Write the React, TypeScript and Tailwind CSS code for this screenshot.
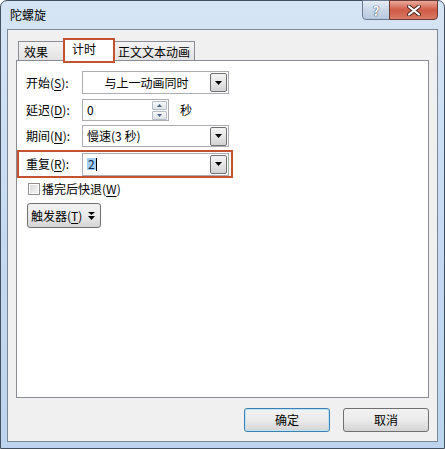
import React from "react";

const font = {
  fontFamily: '"Microsoft YaHei", "Noto Sans CJK SC", "Liberation Sans", sans-serif',
};

function Key({ k }: { k: string }) {
  return (
    <>
      (<span className="underline underline-offset-2">{k}</span>)
    </>
  );
}

function DropButton() {
  return (
    <div className="mr-px flex h-[19px] w-[17px] items-center justify-center rounded-[2px] border border-[#707070] bg-gradient-to-b from-[#f3f3f3] via-[#e6e6e6] to-[#d3d3d3]">
      <svg width="7" height="4" viewBox="0 0 7 4">
        <polygon points="0,0 7,0 3.5,4" fill="#000" />
      </svg>
    </div>
  );
}

function ComboBox({
  text,
  centered,
  height,
  selected,
}: {
  text: string;
  centered?: boolean;
  height: string;
  selected?: boolean;
}) {
  return (
    <div
      className={`flex w-[147px] items-center border border-[#abadb3] bg-white ${height}`}
    >
      <div
        className={`flex-1 text-[12px] leading-none ${centered ? "text-center" : "pl-[4px]"}`}
      >
        {selected ? (
          <span className="inline-flex items-center">
            <span className="bg-[#a6cdf2] px-px text-[#0c2a52]">{text}</span>
            <span className="h-[13px] w-px bg-black" />
          </span>
        ) : (
          text
        )}
      </div>
      <DropButton />
    </div>
  );
}

function Spinner() {
  return (
    <div className="flex h-[22px] w-[87px] items-center border border-[#abadb3] bg-white">
      <div className="flex-1 pl-[4px] text-[12px] leading-none">0</div>
      <div className="mr-px flex flex-col gap-px">
        {[0, 1].map((i) => (
          <div
            key={i}
            className="flex h-[9px] w-[15px] items-center justify-center rounded-[1px] border border-[#b4bcc6] bg-gradient-to-b from-[#f6f7f8] to-[#dfe3e8]"
          >
            <svg width="5" height="3" viewBox="0 0 5 3">
              <polygon
                points={i === 0 ? "0,3 5,3 2.5,0" : "0,0 5,0 2.5,3"}
                fill="#4d6185"
              />
            </svg>
          </div>
        ))}
      </div>
    </div>
  );
}

function Label({ text, k }: { text: string; k: string }) {
  return (
    <div className="w-[56px] text-[12px] leading-none">
      {text}
      <Key k={k} />:
    </div>
  );
}

export default function App() {
  return (
    <div className="h-[449px] w-[445px] bg-white" style={font}>
      <div className="flex h-full w-full flex-col rounded-t-[7px] border border-[#44505e] bg-gradient-to-b from-[#d6e5f5] via-[#c6daf1] to-[#bcd4ee]">
        {/* title bar */}
        <div className="flex h-[28px] items-start justify-between">
          <div className="pl-[9px] pt-[8px] text-[12px] leading-none text-black">
            陀螺旋
          </div>
          <div className="mr-[6px] -mt-px flex">
            <div className="flex h-[20px] w-[28px] items-center justify-center rounded-bl-[4px] border border-[#6b7a90] bg-gradient-to-b from-[#e4ecf6] via-[#cad7e8] to-[#b8c9df]">
              <span className="text-[13px] font-bold leading-none text-white [text-shadow:0_0_1px_#2d3f57,0_0_1px_#2d3f57]">
                ?
              </span>
            </div>
            <div className="-ml-px flex h-[20px] w-[49px] items-center justify-center rounded-br-[4px] border border-[#6b3a35] bg-gradient-to-b from-[#e9a99c] via-[#cf5a46] to-[#d97a67]">
              <svg width="14" height="11" viewBox="0 0 14 11">
                <path
                  d="M2 1.5 L12 9.5 M12 1.5 L2 9.5"
                  stroke="#4a2520"
                  strokeWidth="4"
                  strokeLinecap="round"
                />
                <path
                  d="M2 1.5 L12 9.5 M12 1.5 L2 9.5"
                  stroke="#fff"
                  strokeWidth="2.2"
                  strokeLinecap="round"
                />
              </svg>
            </div>
          </div>
        </div>

        {/* client area */}
        <div className="mx-[6px] h-[413px] border border-[#7d8896] bg-[#f0f0f0]">
          <div className="ml-[8px] w-[413px] pt-[8px]">
            {/* tabs */}
            <div className="flex h-[22px] items-end pl-[2px] text-[12px] leading-none">
              <div className="h-[19px] w-[46px] border border-b-0 border-[#898c95] bg-gradient-to-b from-[#f3f3f3] to-[#e3e3e3] pl-[5px] pt-[4px]">
                效果
              </div>
              <div className="relative z-10 -mb-[3px] -ml-px h-[25px] w-[52px] border-2 border-[#c4512f] bg-white pl-[7px] pt-[3px]">
                计时
              </div>
              <div className="-ml-px h-[19px] w-[81px] border border-b-0 border-l-0 border-[#898c95] bg-gradient-to-b from-[#f3f3f3] to-[#e3e3e3] pl-[4px] pt-[4px]">
                正文文本动画
              </div>
            </div>

            {/* panel */}
            <div className="flex h-[338px] flex-col border border-[#898c95] bg-white">
              <div className="mt-[10px] flex items-center pl-[9px]">
                <Label text="开始" k="S" />
                <ComboBox text="与上一动画同时" centered height="h-[23px]" />
              </div>
              <div className="mt-[5px] flex items-center pl-[9px]">
                <Label text="延迟" k="D" />
                <Spinner />
                <div className="ml-[11px] text-[12px] leading-none">秒</div>
              </div>
              <div className="mt-[4px] flex items-center pl-[9px]">
                <Label text="期间" k="N" />
                <ComboBox text="慢速(3 秒)" height="h-[22px]" />
              </div>
              <div className="mt-[3px] flex h-[28px] w-[216px] items-center border-2 border-[#c4512f] pl-[7px]">
                <Label text="重复" k="R" />
                <ComboBox text="2" selected height="h-[23px]" />
              </div>
              <div className="mt-[5px] flex h-[12px] items-center gap-[2px] pl-[11px] text-[12px] leading-none">
                <div className="h-[12px] w-[12px] border border-[#8e8f8f] bg-white p-px">
                  <div className="h-full w-full bg-gradient-to-br from-[#d8d8d8] to-[#f6f6f6]" />
                </div>
                <span>
                  播完后快退
                  <Key k="W" />
                </span>
              </div>
              <div className="ml-[10px] mt-[8px] flex h-[25px] w-[74px] items-center rounded-[3px] border border-[#707070] bg-gradient-to-b from-[#f2f2f2] via-[#ebebeb] to-[#d4d4d4] pl-[3px] text-[12px] leading-none">
                <span>
                  触发器
                  <Key k="T" />
                </span>
                <svg className="ml-[6px]" width="7" height="8" viewBox="0 0 7 8">
                  <polygon points="0,0 7,0 3.5,3" fill="#000" />
                  <polygon points="0,4 7,4 3.5,8" fill="#000" />
                </svg>
              </div>
            </div>

            {/* buttons */}
            <div className="mt-[10px] flex justify-end gap-[13px] text-[12px] leading-none">
              <div className="flex h-[24px] w-[86px] items-center justify-center rounded-[3px] border border-[#3c7fb1] bg-gradient-to-b from-[#f2f2f2] via-[#ebebeb] to-[#d4d4d4] shadow-[inset_0_0_0_1px_#bfe4f8]">
                确定
              </div>
              <div className="flex h-[24px] w-[86px] items-center justify-center rounded-[3px] border border-[#707070] bg-gradient-to-b from-[#f2f2f2] via-[#ebebeb] to-[#d4d4d4]">
                取消
              </div>
            </div>
          </div>
        </div>
      </div>
    </div>
  );
}
